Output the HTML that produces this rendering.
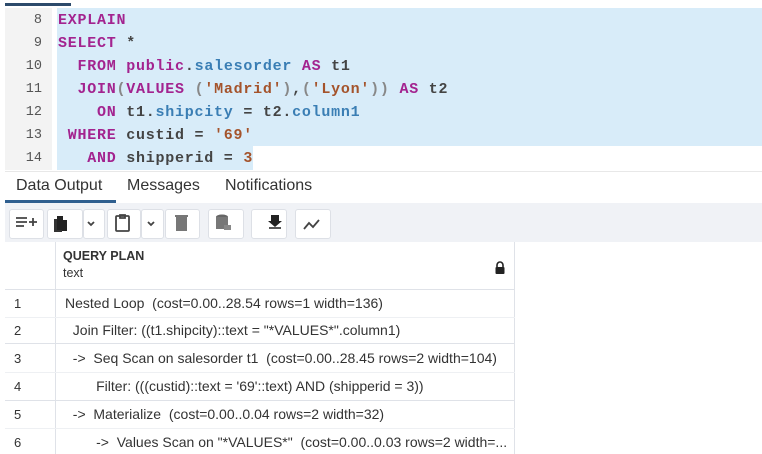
<!DOCTYPE html>
<html><head><meta charset="utf-8"><style>
*{margin:0;padding:0;box-sizing:border-box}
body{width:762px;height:454px;overflow:hidden;background:#fff;font-family:"Liberation Sans",sans-serif;position:relative}
.abs{position:absolute}
.code{font-family:"Liberation Mono",monospace;font-size:15px;letter-spacing:0.75px;font-weight:bold;color:#444;white-space:pre;line-height:23px}
.ln{position:absolute;left:5px;width:47px;text-align:right;padding-right:10px;font-family:"Liberation Mono",monospace;font-size:13.5px;color:#555;line-height:23px}
.k{color:#a3238f}.b{color:#3a7eb4}.s{color:#a4532b}.p{color:#888}
.tab{position:absolute;top:177px;font-size:16px;color:#333}
.btn{position:absolute;top:209px;height:30px;background:#fff;border:1px solid #dde0e6;border-radius:3px}
.row{position:absolute;left:5px;width:510px;height:1px;background:#dfe2e8}
.rn{position:absolute;left:14px;font-size:13px;color:#333}
.rt{position:absolute;font-size:14px;color:#333;white-space:pre}
</style></head><body>
<div class="abs" style="left:5px;top:3px;width:66px;height:3px;background:#2c4a6b"></div>
<div class="abs" style="left:5px;top:8px;width:47px;height:162px;background:#f3f3f3"></div>
<div class="abs" style="left:57px;top:8px;width:705px;height:138px;background:#d8ecf9"></div>
<div class="abs" style="left:57px;top:146px;width:196px;height:24px;background:#d8ecf9"></div>
<div class="ln" style="top:9px">8<br>9<br>10<br>11<br>12<br>13<br>14</div>
<div class="abs code" style="left:58px;top:9px"><span class="k">EXPLAIN</span>
<span class="k">SELECT</span> *
  <span class="k">FROM</span> <span class="k">public</span>.<span class="b">salesorder</span> <span class="k">AS</span> t1
  <span class="k">JOIN</span><span class="p">(</span><span class="k">VALUES</span> <span class="p">(</span><span class="s">'Madrid'</span><span class="p">)</span>,<span class="p">(</span><span class="s">'Lyon'</span><span class="p">))</span> <span class="k">AS</span> t2
    <span class="k">ON</span> t1.<span class="b">shipcity</span> = t2.<span class="b">column1</span>
 <span class="k">WHERE</span> custid = <span class="s">'69'</span>
   <span class="k">AND</span> shipperid = <span class="s">3</span></div>
<div class="abs" style="left:5px;top:171px;width:757px;height:32px;background:#fff;border-top:1px solid #e8e8e8"></div>
<div class="tab" style="left:16px">Data Output</div>
<div class="tab" style="left:127px">Messages</div>
<div class="tab" style="left:225px">Notifications</div>
<div class="abs" style="left:5px;top:200px;width:111px;height:3px;background:#2f5f8f"></div>
<div class="abs" style="left:5px;top:203px;width:757px;height:39px;background:#f0f2f6"></div>
<div class="btn" style="left:9px;width:35px"></div>
<div class="btn" style="left:47px;width:36px"></div><div class="btn" style="left:83px;width:22px"></div>
<div class="btn" style="left:107px;width:34px"></div><div class="btn" style="left:141px;width:23px"></div>
<div class="btn" style="left:165px;width:35px"></div>
<div class="btn" style="left:208px;width:36px"></div>
<div class="btn" style="left:251px;width:36px"></div>
<div class="btn" style="left:295px;width:36px"></div>
<svg class="abs" style="left:0;top:0" width="340" height="242">
<g stroke="#444" stroke-width="1.8" fill="none">
<path d="M16 218h11M16 222h11M16 226h8M29 222h8M33 218v8"/>
<path d="M88 222l3 3 3-3M148 222l3 3 3-3"/>
<rect x="116" y="216" width="13" height="15" rx="1"/><path d="M120 215h5v3h-5z"/>
<path d="M304 229l5-6 4 4 6-7"/>
<path d="M269 228h12"/>
</g>
<path d="M57 216h6v4h4v11h-10z" fill="#222"/><path d="M54 219h3v11h5v2h-8z" fill="#333"/>
<rect x="176" y="217" width="11" height="14" fill="#777"/><rect x="175" y="215" width="13" height="2" fill="#777"/>
<ellipse cx="222" cy="217" rx="6" ry="2.5" fill="#666"/><rect x="216" y="217" width="12" height="12" fill="#777"/><rect x="224" y="225" width="7" height="5" fill="#888"/>
<path d="M271 215h8v6h3l-7 6-7-6h3z" fill="#222"/>
</svg>
<div class="abs" style="left:5px;top:242px;width:510px;height:212px;border-right:1px solid #dfe2e8"></div>
<div class="abs" style="left:55px;top:242px;width:1px;height:212px;background:#dfe2e8"></div>
<div class="abs" style="left:63px;top:249px;font-size:12.5px;font-weight:bold;color:#333">QUERY PLAN</div>
<div class="abs" style="left:63px;top:266px;font-size:12.5px;color:#333">text</div>
<svg class="abs" style="left:494px;top:261px" width="12" height="13"><path d="M3 6V4a3 3 0 016 0v2" stroke="#222" stroke-width="1.6" fill="none"/><rect x="1.5" y="6" width="9" height="7" rx="1" fill="#222"/></svg>
<div class="row" style="top:289px"></div>
<div class="row" style="top:317px;background:#eef0f3"></div>
<div class="row" style="top:343px"></div>
<div class="row" style="top:372px;background:#eef0f3"></div>
<div class="row" style="top:400px"></div>
<div class="row" style="top:428px;background:#eef0f3"></div>
<div class="rn" style="top:296px">1</div><div class="rt" style="left:65px;top:295px">Nested Loop  (cost=0.00..28.54 rows=1 width=136)</div>
<div class="rn" style="top:323px">2</div><div class="rt" style="left:65px;top:322px">  Join Filter: ((t1.shipcity)::text = "*VALUES*".column1)</div>
<div class="rn" style="top:351px">3</div><div class="rt" style="left:65px;top:350px">  -&gt;  Seq Scan on salesorder t1  (cost=0.00..28.45 rows=2 width=104)</div>
<div class="rn" style="top:379px">4</div><div class="rt" style="left:65px;top:378px">        Filter: (((custid)::text = '69'::text) AND (shipperid = 3))</div>
<div class="rn" style="top:407px">5</div><div class="rt" style="left:65px;top:406px">  -&gt;  Materialize  (cost=0.00..0.04 rows=2 width=32)</div>
<div class="rn" style="top:435px">6</div><div class="rt" style="left:65px;top:434px">        -&gt;  Values Scan on "*VALUES*"  (cost=0.00..0.03 rows=2 width=...</div>
</body></html>
